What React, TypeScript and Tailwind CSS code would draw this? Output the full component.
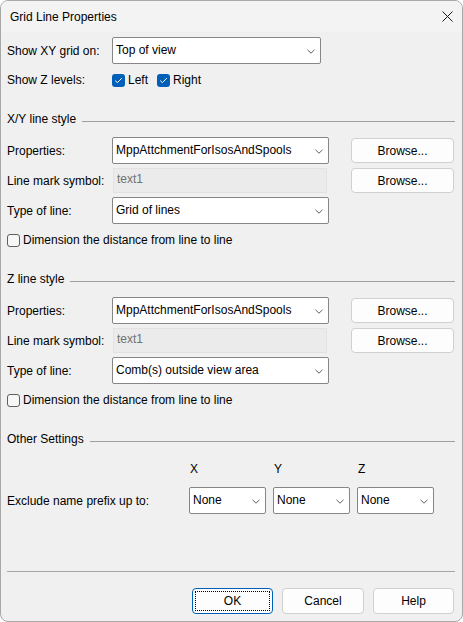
import React from "react";

const font = { fontFamily: '"Liberation Sans", Arial, sans-serif' };

function Chevron() {
  return (
    <svg width="8" height="5" viewBox="0 0 8 5" className="shrink-0">
      <path d="M0.5 0.8 L4 4.2 L7.5 0.8" fill="none" stroke="#606060" strokeWidth="1" />
    </svg>
  );
}

function Select({ value, className }: { value: string; className: string }) {
  return (
    <div
      className={`flex items-center justify-between rounded-[2px] border border-[#868686] bg-white pl-[3px] pr-[5px] pb-[2px] ${className}`}
    >
      <span className="whitespace-nowrap">{value}</span>
      <span className="pt-[3px]">
        <Chevron />
      </span>
    </div>
  );
}

function Button({ label, className, focused }: { label: string; className: string; focused?: boolean }) {
  return (
    <button
      type="button"
      className={`relative flex items-center justify-center rounded-[4px] border bg-[#fdfdfd] ${
        focused ? "border-[#005fb8]" : "border-[#d0d0d0]"
      } ${className}`}
    >
      {focused && (
        <span className="absolute inset-[2px] border border-dotted border-black"></span>
      )}
      <span>{label}</span>
    </button>
  );
}

function CheckBox({ checked }: { checked: boolean }) {
  if (checked) {
    return (
      <span className="flex h-[13px] w-[13px] shrink-0 items-center justify-center rounded-[3px] bg-[#005fb8]">
        <svg width="9" height="7" viewBox="0 0 9 7">
          <path d="M1.2 3.6 L3.4 5.6 L7.8 1.2" fill="none" stroke="white" strokeWidth="1" />
        </svg>
      </span>
    );
  }
  return (
    <span className="h-[13px] w-[13px] shrink-0 rounded-[3px] border border-[#5f5f5f] bg-[#f7f7f7]"></span>
  );
}

function SectionHeader({ title, className }: { title: string; className: string }) {
  return (
    <div className={`flex h-[14px] items-start gap-[6px] ${className}`}>
      <span className="leading-[14px] whitespace-nowrap">{title}</span>
      <span className="mt-[9px] h-px flex-1 bg-[#a0a0a0]"></span>
    </div>
  );
}

function LineStyle({ title, typeOfLine }: { title: string; typeOfLine: string }) {
  return (
    <div className="flex flex-col">
      <SectionHeader title={title} className="mt-[22px]" />
      <div className="mt-[11px] flex h-[27px] items-center">
        <span className="w-[105px] shrink-0">Properties:</span>
        <Select value="MppAttchmentForIsosAndSpools" className="h-[27px] w-[217px]" />
        <Button label="Browse..." className="ml-[22px] h-[25px] w-[103px]" />
      </div>
      <div className="mt-[4px] flex h-[25px] items-center">
        <span className="w-[105px] shrink-0">Line mark symbol:</span>
        <div className="ml-[1px] flex h-[25px] w-[214px] items-center border border-[#e2e2e2] bg-[#ebebeb] pb-[3px] pl-[3px] text-[#707070]">
          text1
        </div>
        <Button label="Browse..." className="ml-[24px] h-[25px] w-[103px]" />
      </div>
      <div className="mt-[4px] flex h-[27px] items-center">
        <span className="w-[105px] shrink-0">Type of line:</span>
        <Select value={typeOfLine} className="h-[27px] w-[217px]" />
      </div>
      <div className="mt-[6px] flex h-[20px] items-center gap-[3px]">
        <CheckBox checked={false} />
        <span>Dimension the distance from line to line</span>
      </div>
    </div>
  );
}

export default function App() {
  return (
    <div
      style={font}
      className="flex h-[622px] w-[463px] flex-col overflow-hidden rounded-[8px] border border-[#a8a8a8] bg-[#f0f0f0] text-[12px] text-black"
    >
      {/* title bar */}
      <div className="flex h-[31px] shrink-0 items-center justify-between bg-[#f3f3f3] pl-[9px] pr-[9px]">
        <span className="text-[12px]">Grid Line Properties</span>
        <svg width="11" height="11" viewBox="0 0 11 11">
          <path d="M0.5 0.5 L10.5 10.5 M10.5 0.5 L0.5 10.5" stroke="#1a1a1a" strokeWidth="1" />
        </svg>
      </div>

      <div className="flex flex-1 flex-col pl-[6px] pr-[7px]">
        <div className="mt-[5px] flex h-[27px] items-center">
          <span className="w-[105px] shrink-0">Show XY grid on:</span>
          <Select value="Top of view" className="h-[27px] w-[209px]" />
        </div>
        <div className="mt-[6px] flex h-[20px] items-center">
          <span className="w-[105px] shrink-0">Show Z levels:</span>
          <CheckBox checked={true} />
          <span className="ml-[3px]">Left</span>
          <span className="ml-[9px]">
            <CheckBox checked={true} />
          </span>
          <span className="ml-[3px]">Right</span>
        </div>

        <LineStyle title="X/Y line style" typeOfLine="Grid of lines" />
        <LineStyle title="Z line style" typeOfLine="Comb(s) outside view area" />

        <SectionHeader title="Other Settings" className="mt-[22px]" />
        <div className="mt-[16px] flex h-[14px] items-center leading-[14px]">
          <span className="w-[183px] shrink-0"></span>
          <span className="w-[84px]">X</span>
          <span className="w-[84px]">Y</span>
          <span>Z</span>
        </div>
        <div className="mt-[11px] flex h-[27px] items-center">
          <span className="w-[182px] shrink-0">Exclude name prefix up to:</span>
          <div className="flex gap-[7px]">
            <Select value="None" className="h-[27px] w-[77px]" />
            <Select value="None" className="h-[27px] w-[77px]" />
            <Select value="None" className="h-[27px] w-[77px]" />
          </div>
        </div>

        <div className="mt-[57px] h-px bg-[#a5a5a5]"></div>

        <div className="mt-[16px] flex justify-end gap-[9px] pr-[1px]">
          <Button label="OK" focused className="h-[26px] w-[81px]" />
          <Button label="Cancel" className="h-[26px] w-[82px]" />
          <Button label="Help" className="h-[26px] w-[81px]" />
        </div>
      </div>
    </div>
  );
}
